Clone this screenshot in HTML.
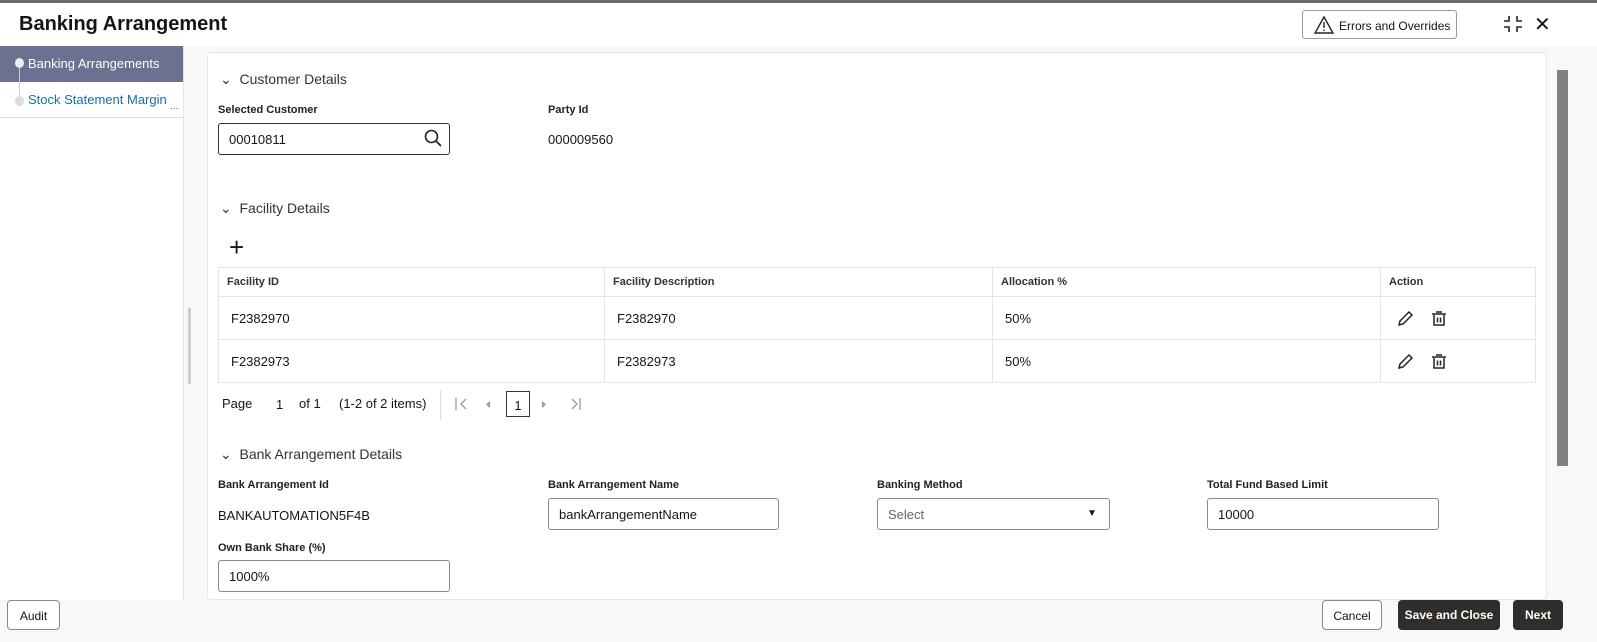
<!DOCTYPE html>
<html><head><style>
*{box-sizing:border-box;margin:0;padding:0}
body{width:1597px;height:642px;overflow:hidden;background:#fff;font-family:"Liberation Sans",sans-serif;color:#161513;position:relative;font-size:13px}
.abs{position:absolute}
.top{left:0;top:0;width:1597px;height:3px;background:#6b6b6b}
h1{position:absolute;left:19px;top:13px;font-size:20px;font-weight:bold}
.errbtn{left:1302px;top:10px;width:155px;height:29px;border:1px solid #999;border-radius:3px;font-size:12px;padding:8px 0 0 36px}
.side{left:0;top:46px;width:184px;height:554px;background:#fff;border-right:1px solid #e4e4e4}
.bg{left:184px;top:46px;width:1413px;height:554px;background:#f8f8f7}
.card{left:207px;top:52px;width:1340px;height:548px;background:#fff;border:1px solid #e6e6e6;border-radius:4px}
.sel{left:0;top:46px;width:183px;height:36px;background:#6a7191;color:#fff;font-size:13px;padding:10px 0 0 28px}
.item2{left:28px;top:92px;color:#1a6da6;font-size:13px}
.dot{width:9px;height:10px;border-radius:50%;background:#ddd}
.sec{font-size:14px;color:#333}
.lbl{font-size:11px;font-weight:bold;color:#222}
.val{font-size:13px}
.inp{border:1px solid #8a8a8a;border-radius:3px;height:32px;padding:8px 10px;font-size:13px;background:#fff}
table{position:absolute;left:218px;top:267px;width:1318px;border-collapse:collapse;font-size:13px}
td,th{border:1px solid #e4e4e4;text-align:left;padding:0 8px}
th{height:29px;font-size:11px;font-weight:bold;color:#333}
td{height:43px;padding-left:12px}
.btn{height:30px;border-radius:4px;font-size:12px;text-align:center;padding-top:8px}
.foot{left:0;top:600px;width:1597px;height:42px;background:#f8f8f7}
</style></head><body>
<div class="abs top"></div>
<h1>Banking Arrangement</h1>
<div class="abs errbtn"><svg class="abs" style="left:11px;top:5px" width="20" height="18" viewBox="0 0 20 18"><path d="M10 1L19 17H1Z" fill="none" stroke="#222" stroke-width="1.4"/><path d="M10 6v6M10 13.5v1.5" stroke="#222" stroke-width="1.4"/></svg>Errors and Overrides</div>
<svg class="abs" style="left:1503px;top:15px" width="20" height="18"><path d="M6 1v5H1M14 1v5h5M6 17v-5H1M14 17v-5h5" fill="none" stroke="#222" stroke-width="1.6"/></svg>
<div class="abs" style="left:1534px;top:12px;font-size:20px">✕</div>
<div class="abs bg"></div>
<div class="abs side"></div>
<div class="abs sel">Banking Arrangements</div>
<div class="abs dot" style="left:15px;top:58px;background:#eee"></div>
<div class="abs" style="left:19px;top:68px;width:1px;height:30px;background:#ccc"></div>
<div class="abs dot" style="left:15px;top:96px"></div>
<div class="abs item2">Stock Statement Margin</div>
<div class="abs" style="left:170px;top:101px;color:#1a6da6;font-size:10px">...</div>
<div class="abs" style="left:0;top:117px;width:183px;height:1px;background:#ddd"></div>
<div class="abs" style="left:188px;top:308px;width:3px;height:76px;background:#ccc"></div>
<div class="abs card"></div>
<div class="abs" style="left:1557px;top:70px;width:11px;height:396px;background:#808080"></div>

<div class="abs sec" style="left:220px;top:71px">⌄&nbsp;&nbsp;Customer Details</div>
<div class="abs lbl" style="left:218px;top:104px">Selected Customer</div>
<div class="abs inp" style="left:218px;top:123px;width:232px;height:32px;border-color:#333">00010811</div>
<svg class="abs" style="left:424px;top:129px" width="18" height="18"><circle cx="7.5" cy="7.5" r="6" fill="none" stroke="#222" stroke-width="1.6"/><path d="M12 12l5 5" stroke="#222" stroke-width="1.8"/></svg>
<div class="abs lbl" style="left:548px;top:104px">Party Id</div>
<div class="abs val" style="left:548px;top:132px">000009560</div>

<div class="abs sec" style="left:220px;top:200px">⌄&nbsp;&nbsp;Facility Details</div>
<div class="abs" style="left:229px;top:234px;font-size:26px;font-weight:300;line-height:26px">+</div>
<table>
<tr><th style="width:386px">Facility ID</th><th style="width:388px">Facility Description</th><th style="width:388px">Allocation %</th><th>Action</th></tr>
<tr><td>F2382970</td><td>F2382970</td><td>50%</td><td></td></tr>
<tr><td>F2382973</td><td>F2382973</td><td>50%</td><td></td></tr>
</table>
<svg class="abs" style="left:1396px;top:309px" width="60" height="60"><g fill="none" stroke="#222" stroke-width="1.5"><path d="M3 16l1-4 9-9 3 3-9 9z"/><path d="M40 3h6M36 5h14M38 6v10h10V6M41.5 8.5v5M44.5 8.5v5"/><g transform="translate(0,43)"><path d="M3 16l1-4 9-9 3 3-9 9z"/><path d="M40 3h6M36 5h14M38 6v10h10V6M41.5 8.5v5M44.5 8.5v5"/></g></g></svg>

<div class="abs val" style="left:222px;top:396px">Page</div>
<div class="abs val" style="left:276px;top:397px">1</div>
<div class="abs val" style="left:299px;top:396px">of 1</div>
<div class="abs val" style="left:339px;top:396px">(1-2 of 2 items)</div>
<div class="abs" style="left:440px;top:390px;width:1px;height:30px;background:#ddd"></div>
<svg class="abs" style="left:455px;top:396px" width="130" height="16"><g fill="none" stroke="#999" stroke-width="1.3"><path d="M1 2v12M11 3l-5 5 5 5M117 3l5 5-5 5M125 2v12"/></g><path d="M35 5v7l-4-3.5z" fill="#999"/><path d="M87 5v7l4-3.5z" fill="#999"/></svg>
<div class="abs" style="left:506px;top:391px;width:24px;height:26px;border:1px solid #333;text-align:center;padding-top:6px">1</div>

<div class="abs sec" style="left:220px;top:446px">⌄&nbsp;&nbsp;Bank Arrangement Details</div>
<div class="abs lbl" style="left:218px;top:479px">Bank Arrangement Id</div>
<div class="abs val" style="left:218px;top:508px">BANKAUTOMATION5F4B</div>
<div class="abs lbl" style="left:548px;top:479px">Bank Arrangement Name</div>
<div class="abs inp" style="left:548px;top:498px;width:231px">bankArrangementName</div>
<div class="abs lbl" style="left:877px;top:479px">Banking Method</div>
<div class="abs inp" style="left:877px;top:498px;width:233px;color:#666">Select</div>
<div class="abs" style="left:1087px;top:508px;font-size:10px">▼</div>
<div class="abs lbl" style="left:1207px;top:479px">Total Fund Based Limit</div>
<div class="abs inp" style="left:1207px;top:498px;width:232px">10000</div>
<div class="abs lbl" style="left:218px;top:542px">Own Bank Share (%)</div>
<div class="abs inp" style="left:218px;top:560px;width:232px">1000%</div>

<div class="abs foot"></div>
<div class="abs btn" style="left:7px;top:600px;width:53px;border:1px solid #888;background:#fff">Audit</div>
<div class="abs btn" style="left:1322px;top:600px;width:60px;border:1px solid #888;background:#fff">Cancel</div>
<div class="abs btn" style="left:1398px;top:600px;width:102px;background:#312d2a;color:#fff;font-weight:bold">Save and Close</div>
<div class="abs btn" style="left:1513px;top:600px;width:50px;background:#312d2a;color:#fff;font-weight:bold">Next</div>
</body></html>
